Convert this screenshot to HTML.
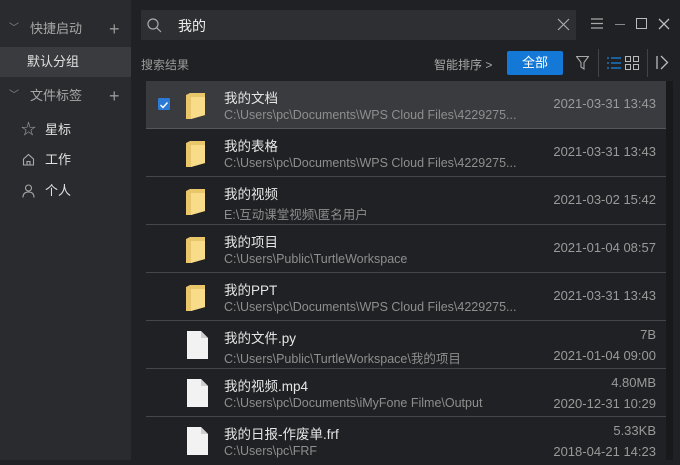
<!DOCTYPE html>
<html><head><meta charset="utf-8"><style>
*{margin:0;padding:0;box-sizing:border-box}
body{width:680px;height:460px;overflow:hidden;background:#202124;font-family:"Liberation Sans","Noto Sans CJK SC",sans-serif;color:#d8d8d8;position:relative}
.side{position:absolute;left:0;top:0;width:131px;height:460px;background:#2a2b2e}
.sh{position:absolute;left:0;width:131px;height:30px;font-size:13px;color:#a8a8a8;line-height:30px}
.sh .ch{position:absolute;left:9px;top:0;font-size:10px;color:#888}
.sh .t{position:absolute;left:30px}
.sh .p{position:absolute;left:109px;font-size:18px;color:#999;font-weight:300}
.si{position:absolute;left:0;width:131px;height:30px;line-height:30px;font-size:13px;color:#e0e0e0}
.abs{position:absolute}
.search{position:absolute;left:141px;top:10px;width:435px;height:30px;background:#2e2f33}
.row{position:absolute;left:146px;width:520px;height:48px;border-bottom:1px solid #45464a}
.row .n{position:absolute;left:78px;top:6px;font-size:13.5px;color:#e6e6e6}
.row .pth{position:absolute;left:78px;top:27px;font-size:12.5px;color:#8e8e8e;white-space:nowrap}
.row .d{position:absolute;right:10px;top:15px;font-size:13px;color:#9a9a9a}
.row .s{position:absolute;right:10px;top:6px;font-size:13px;color:#9a9a9a}
.row .d2{position:absolute;right:10px;top:27px;font-size:13px;color:#9a9a9a}
.fold{position:absolute;left:40px;top:12px;width:19px;height:26px}
.file{position:absolute;left:41px;top:10px;width:21px;height:28px}
</style></head><body>
<div class="side">
 <div class="sh" style="top:14px"><span class="ch">﹀</span><span class="t">快捷启动</span><span class="p">+</span></div>
 <div class="si" style="top:47px;background:#3a3b3f"><span style="margin-left:27px">默认分组</span></div>
 <div class="sh" style="top:81px"><span class="ch">﹀</span><span class="t">文件标签</span><span class="p">+</span></div>
 <div class="si" style="top:115px"><span style="position:absolute;left:21px;color:#aaa;font-size:15px">☆</span><span style="position:absolute;left:45px">星标</span></div>
 <div class="si" style="top:145px"><svg class="abs" style="left:22px;top:8px" width="13" height="13" viewBox="0 0 13 13"><path d="M1.5 6L6.5 1.5 11.5 6V12H1.5Z M5 12V8.5H8V12" fill="none" stroke="#aaa" stroke-width="1.1"/></svg><span style="position:absolute;left:45px">工作</span></div>
 <div class="si" style="top:176px"><svg class="abs" style="left:22px;top:8px" width="13" height="14" viewBox="0 0 13 14"><circle cx="6.5" cy="4" r="3" fill="none" stroke="#aaa" stroke-width="1.1"/><path d="M1 13.5C1 9.5 3.5 8 6.5 8S12 9.5 12 13.5" fill="none" stroke="#aaa" stroke-width="1.1"/></svg><span style="position:absolute;left:45px">个人</span></div>
</div>
<div class="search">
 <svg class="abs" style="left:6px;top:8px" width="15" height="15" viewBox="0 0 15 15"><circle cx="6" cy="6" r="5" fill="none" stroke="#aaa" stroke-width="1.2"/><path d="M9.8 9.8L14 14" stroke="#aaa" stroke-width="1.2"/></svg>
 <span class="abs" style="left:37px;top:6px;font-size:14px;color:#eee">我的</span>
 <svg class="abs" style="left:416px;top:8px" width="13" height="13"><path d="M1 1L12 12M12 1L1 12" stroke="#aaa" stroke-width="1.2"/></svg>
</div>
<svg class="abs" style="left:591px;top:18px" width="12" height="11"><path d="M0 1H12M0 5.5H12M0 10H12" stroke="#aaa" stroke-width="1.3"/></svg>
<div class="abs" style="left:615px;top:24px;width:10px;height:1px;background:#888"></div>
<div class="abs" style="left:636px;top:18px;width:11px;height:11px;border:1.3px solid #bbb"></div>
<svg class="abs" style="left:658px;top:18px" width="12" height="12"><path d="M1 1L11 11M11 1L1 11" stroke="#bbb" stroke-width="1.3"/></svg>
<span class="abs" style="left:141px;top:56px;font-size:12px;color:#9a9a9a">搜索结果</span>
<span class="abs" style="left:434px;top:56px;font-size:12px;color:#a8a8a8">智能排序 &gt;</span>
<div class="abs" style="left:507px;top:51px;width:56px;height:24px;background:#1479d6;border-radius:2px;color:#fff;font-size:13px;line-height:24px;text-align:center">全部</div>
<svg class="abs" style="left:576px;top:56px" width="13" height="14"><path d="M0.5 0.5H12.5L8 6.5V13L5 11V6.5Z" fill="none" stroke="#aaa" stroke-width="1.1"/></svg>
<div class="abs" style="left:598px;top:49px;width:1px;height:28px;background:#444"></div>
<svg class="abs" style="left:607px;top:57px" width="14" height="12"><path d="M0 1H2M4 1H14M0 6H2M4 6H14M0 11H2M4 11H14" stroke="#1a86e0" stroke-width="1.3"/></svg>
<svg class="abs" style="left:625px;top:56px" width="14" height="14"><rect x="0.5" y="0.5" width="5" height="5" fill="none" stroke="#bbb"/><rect x="8.5" y="0.5" width="5" height="5" fill="none" stroke="#bbb"/><rect x="0.5" y="8.5" width="5" height="5" fill="none" stroke="#bbb"/><rect x="8.5" y="8.5" width="5" height="5" fill="none" stroke="#bbb"/></svg>
<div class="abs" style="left:647px;top:49px;width:1px;height:28px;background:#444"></div>
<svg class="abs" style="left:656px;top:55px" width="13" height="15"><path d="M1 1V14M5 1L11.5 7.5 5 14" fill="none" stroke="#bbb" stroke-width="1.3"/></svg>
<div class="abs" style="left:666px;top:81px;width:7px;height:379px;background:#18191b"></div>

<div class="row" style="top:81px;background:#3a3b3f;border-bottom-color:#55565a">
 <div class="abs" style="left:12px;top:17px;width:12px;height:12px;background:#2d7ad6;border-radius:1px"><svg width="12" height="12"><path d="M2.5 6L5 8.5 9.5 3.5" fill="none" stroke="#fff" stroke-width="1.4"/></svg></div>
 <svg class="fold" viewBox="0 0 19 26"><path d="M0 2L4 0H19V22L5 26H0Z" fill="#e8c66a"/><path d="M5 4H19V22L5 26Z" fill="#f8dc8a"/></svg>
 <div class="n">我的文档</div><div class="pth">C:\Users\pc\Documents\WPS Cloud Files\4229275...</div><div class="d">2021-03-31 13:43</div></div>
<div class="row" style="top:129px"><svg class="fold" viewBox="0 0 19 26"><path d="M0 2L4 0H19V22L5 26H0Z" fill="#e8c66a"/><path d="M5 4H19V22L5 26Z" fill="#f8dc8a"/></svg><div class="n">我的表格</div><div class="pth">C:\Users\pc\Documents\WPS Cloud Files\4229275...</div><div class="d">2021-03-31 13:43</div></div>
<div class="row" style="top:177px"><svg class="fold" viewBox="0 0 19 26"><path d="M0 2L4 0H19V22L5 26H0Z" fill="#e8c66a"/><path d="M5 4H19V22L5 26Z" fill="#f8dc8a"/></svg><div class="n">我的视频</div><div class="pth">E:\互动课堂视频\匿名用户</div><div class="d">2021-03-02 15:42</div></div>
<div class="row" style="top:225px"><svg class="fold" viewBox="0 0 19 26"><path d="M0 2L4 0H19V22L5 26H0Z" fill="#e8c66a"/><path d="M5 4H19V22L5 26Z" fill="#f8dc8a"/></svg><div class="n">我的项目</div><div class="pth">C:\Users\Public\TurtleWorkspace</div><div class="d">2021-01-04 08:57</div></div>
<div class="row" style="top:273px"><svg class="fold" viewBox="0 0 19 26"><path d="M0 2L4 0H19V22L5 26H0Z" fill="#e8c66a"/><path d="M5 4H19V22L5 26Z" fill="#f8dc8a"/></svg><div class="n">我的PPT</div><div class="pth">C:\Users\pc\Documents\WPS Cloud Files\4229275...</div><div class="d">2021-03-31 13:43</div></div>
<div class="row" style="top:321px"><svg class="file" viewBox="0 0 21 28"><path d="M0 0H14L21 7V28H0Z" fill="#f2f2f2"/><path d="M14 0V7H21" fill="#cfcfcf"/></svg><div class="n">我的文件.py</div><div class="pth">C:\Users\Public\TurtleWorkspace\我的项目</div><div class="s">7B</div><div class="d2">2021-01-04 09:00</div></div>
<div class="row" style="top:369px"><svg class="file" viewBox="0 0 21 28"><path d="M0 0H14L21 7V28H0Z" fill="#f2f2f2"/><path d="M14 0V7H21" fill="#cfcfcf"/></svg><div class="n">我的视频.mp4</div><div class="pth">C:\Users\pc\Documents\iMyFone Filme\Output</div><div class="s">4.80MB</div><div class="d2">2020-12-31 10:29</div></div>
<div class="row" style="top:417px;border:none"><svg class="file" viewBox="0 0 21 28"><path d="M0 0H14L21 7V28H0Z" fill="#f2f2f2"/><path d="M14 0V7H21" fill="#cfcfcf"/></svg><div class="n">我的日报-作废单.frf</div><div class="pth">C:\Users\pc\FRF</div><div class="s">5.33KB</div><div class="d2">2018-04-21 14:23</div></div>
</body></html>
